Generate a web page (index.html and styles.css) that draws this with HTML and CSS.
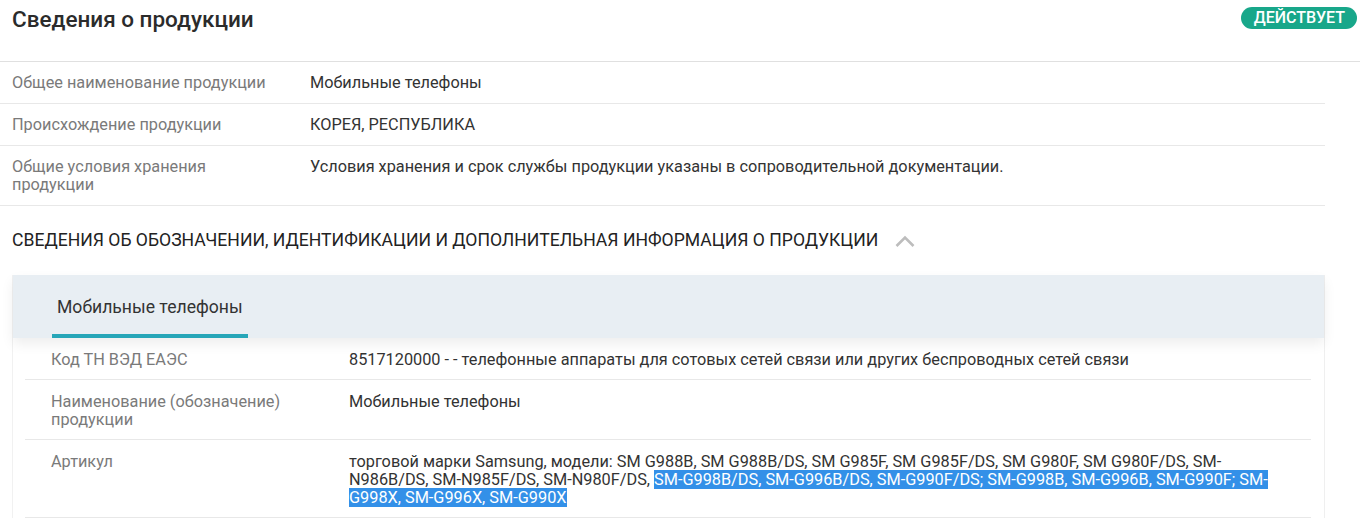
FILE: index.html
```html
<!DOCTYPE html>
<html lang="ru">
<head>
<meta charset="utf-8">
<link rel="stylesheet" href="styles.css">
</head>
<body>
<div class="page">
  <header class="head">
    <h1 class="title">Сведения о продукции</h1>
    <span class="badge">ДЕЙСТВУЕТ</span>
  </header>
  <div class="rows">
    <div class="row">
      <div class="label">Общее наименование продукции</div>
      <div class="value">Мобильные телефоны</div>
    </div>
    <div class="row">
      <div class="label">Происхождение продукции</div>
      <div class="value">КОРЕЯ, РЕСПУБЛИКА</div>
    </div>
    <div class="row">
      <div class="label">Общие условия хранения продукции</div>
      <div class="value">Условия хранения и срок службы продукции указаны в сопроводительной документации.</div>
    </div>
  </div>
  <div class="section-head">
    <span class="section-title">СВЕДЕНИЯ ОБ ОБОЗНАЧЕНИИ, ИДЕНТИФИКАЦИИ И ДОПОЛНИТЕЛЬНАЯ ИНФОРМАЦИЯ О ПРОДУКЦИИ</span>
    <svg class="chevron" width="20" height="14" viewBox="0 0 20 14"><path d="M1.5 12 L10 3.5 L18.5 12" fill="none" stroke="#bdbdbd" stroke-width="2.6"/></svg>
  </div>
  <div class="card">
    <div class="tabs">
      <div class="tab active">Мобильные телефоны</div>
    </div>
    <div class="inner">
      <div class="row irow">
        <div class="label">Код ТН ВЭД ЕАЭС</div>
        <div class="value">8517120000 - - телефонные аппараты для сотовых сетей связи или других беспроводных сетей связи</div>
      </div>
      <div class="row irow">
        <div class="label">Наименование (обозначение) продукции</div>
        <div class="value">Мобильные телефоны</div>
      </div>
      <div class="row irow">
        <div class="label">Артикул</div>
        <div class="value">торговой марки Samsung, модели: SM G988B, SM G988B/DS, SM G985F, SM G985F/DS, SM G980F, SM G980F/DS, SM-N986B/DS, SM-N985F/DS, SM-N980F/DS, <span class="sel">SM-G998B/DS, SM-G996B/DS, SM-G990F/DS; SM-G998B, SM-G996B, SM-G990F; SM-G998X, SM-G996X, SM-G990X</span></div>
      </div>
    </div>
  </div>
</div>
</body>
</html>
```
FILE: styles.css
```css
html, body {
  margin: 0;
  padding: 0;
  background: #fff;
}
body {
  font-family: Roboto, "Noto Sans", Arial, sans-serif;
  color: #333;
  width: 1360px;
  height: 528px;
  overflow: hidden;
}
.page {
  width: 1360px;
}
.head {
  display: flex;
  align-items: flex-start;
  justify-content: space-between;
  height: 61px;
  border-bottom: 1px solid #e0e0e0;
  padding: 0 3px 0 12px;
}
.title {
  margin: 0;
  padding-top: 5px;
  font-size: 22.5px;
  line-height: 28px;
  font-weight: 500;
  color: #2b2b2b;
}
.badge {
  margin-top: 7px;
  background: #18a78a;
  color: #fff;
  font-size: 16px;
  font-weight: 500;
  line-height: 22px;
  height: 22px;
  padding: 0 12px 0 13px;
  border-radius: 11px;
}
.rows {
  width: 1325px;
}
.row {
  display: flex;
  border-bottom: 1px solid #e8e8e8;
  padding: 12px 0 11px 12px;
  font-size: 16.3px;
  line-height: 18px;
}
.label {
  width: 268px;
  flex: none;
  padding-right: 30px;
  color: #7a7a7a;
}
.value {
  flex: 1;
  color: #333;
}
.section-head {
  display: flex;
  align-items: center;
  gap: 17px;
  padding: 24px 0 25px 12px;
  height: 20px;
}
.section-title {
  font-size: 17.6px;
  line-height: 20px;
  color: #222;
}
.chevron {
  display: block;
  margin-top: 1px;
}
.card {
  margin-left: 12px;
  width: 1311px;
  border-left: 1px solid #f1f1f1;
  border-right: 1px solid #efefef;
  background: #fff;
}
.tabs {
  display: flex;
  background: #e8eef3;
  height: 63px;
  padding-left: 39px;
  box-shadow: 0 6px 12px rgba(0, 0, 0, 0.07);
  position: relative;
}
.tab {
  font-size: 17.6px;
  line-height: 20px;
  color: #333;
  padding: 22px 5px 0 5px;
  white-space: nowrap;
  border-bottom: 4px solid transparent;
}
.tab.active {
  border-bottom-color: #26a6b8;
}
.inner {
  padding: 0 13px 0 12px;
}
.irow {
  padding-top: 13px;
  padding-bottom: 10px;
  padding-left: 26px;
  padding-right: 20px;
}
.sel {
  background: #3390e8;
  color: #fff;
}
```
